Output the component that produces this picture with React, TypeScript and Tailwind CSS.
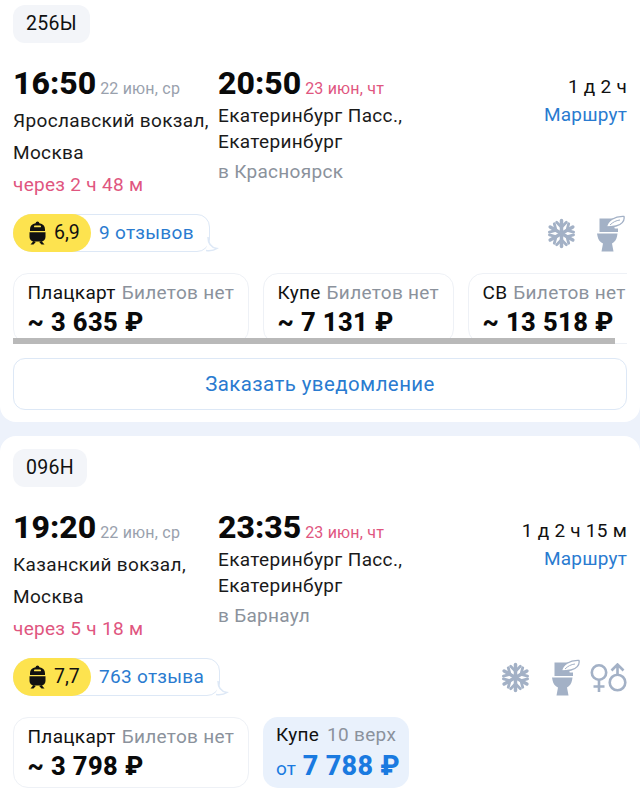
const font = "font-['Roboto',sans-serif]";

function Snow() {
  return (
    <svg width="31" height="31" viewBox="0 0 32 32" fill="none" stroke="#a3b1c6" strokeLinecap="round">
      {[0, 60, 120].map((a) => (
        <g key={a} transform={`rotate(${a} 16 16)`}>
          <path d="M16 2.500v27" strokeWidth="3.600" />
          <path d="M11 4.500 16 9.500l5-5M11 27.500 16 22.500l5 5" strokeWidth="2.900" />
        </g>
      ))}
    </svg>
  );
}

function Toilet() {
  return (
    <svg width="28" height="37" viewBox="0 0 28 37">
      <path d="M2.500 3.500h14l1.500 13.500H2.500z" fill="#a3b1c6" />
      <path d="M0 18.500h20.500l-.5 3c-.6 3.500-2.500 5.500-5 7l1.500 8H4.500L6 28.500c-3-1.500-4.800-3.500-5.400-7z" fill="#a3b1c6" />
      <path d="M9.500 12c1-6 8-11 17.500-10.500 1 4.500-3 8.500-8 9.500-3 .6-6.500 1-9.500 1z" fill="#fff" stroke="#a3b1c6" strokeWidth="1.300" />
      <path d="M13 10c3-3 6-4.500 10-5" fill="none" stroke="#a3b1c6" strokeWidth="1" />
      <path d="M7 13.500h14v3.500H7z" fill="#a3b1c6" />
    </svg>
  );
}

function Gender() {
  return (
    <svg width="37" height="29" viewBox="0 0 37 29" fill="none" stroke="#a3b1c6" strokeWidth="2.600">
      <circle cx="9" cy="9.500" r="7.200" />
      <path d="M9 17v12M3.500 23.500h11" />
      <circle cx="27.500" cy="19.500" r="7.800" />
      <path d="M27.500 12V2M21.500 7.500 27.500 1.500l6 6" />
    </svg>
  );
}

function Train() {
  return (
    <svg width="17" height="24" viewBox="0 0 17 24">
      <path d="M8.500 0.500a2 2 0 0 1 1.900 1.800c3.600.6 5.600 2.900 5.600 6V10H1V8.300c0-3.100 2-5.400 5.600-6A2 2 0 0 1 8.500 0.500z" fill="#111" />
      <rect x="5" y="4.500" width="7" height="1.800" rx=".9" fill="#fde34f" />
      <path d="M.5 11.200h16V15.500c0 3.300-2.200 5-4.500 5H5c-2.300 0-4.500-1.700-4.500-5z" fill="#111" />
      <path d="M4.500 20 1.500 23.500h3L6.800 21M12.500 20l3 3.500h-3L10.200 21" fill="#111" />
    </svg>
  );
}

function Rating({ score, text, width }: { score: string; text: string; width: string }) {
  return (
    <div className={`relative h-[38px] ${width}`}>
      <div className="flex h-full items-center rounded-r-[13px] rounded-l-[19px] border-[1.500px] border-[#dde8f6] bg-white pl-[78px] text-[19px] tracking-[0.3px] text-[#2a7bd0]">
        <span className="pl-[7px]">{text}</span>
      </div>
      <svg className="absolute -right-[10px] bottom-0" width="14" height="16" viewBox="0 0 14 16" fill="none">
        <path d="M2 1c0 7 3 10.500 9 11.500-3 2-7 2.500-11 2" fill="#fff" stroke="#dde8f6" strokeWidth="1.500" />
      </svg>
      <div className="absolute left-0 top-0 flex h-[38px] w-[78px] items-center gap-[8px] rounded-full bg-[#fde34f] pl-[16px] text-[19.500px] text-[#111]">
        <Train />
        <span>{score}</span>
      </div>
    </div>
  );
}

function Price({ name, note, price, width }: { name: string; note: string; price: string; width: string }) {
  return (
    <div className={`h-[71px] shrink-0 rounded-[15px] border-[1.500px] border-[#eef1f6] bg-white pl-[13.500px] pt-[6px] ${width}`}>
      <div className="whitespace-nowrap text-[19px] leading-[26px] tracking-[0.3px] text-[#111]">
        {name} <span className="ml-[1px] text-[#8b929c]">{note}</span>
      </div>
      <div className="whitespace-nowrap text-[25.500px] font-extrabold leading-[33px] tracking-[0.4px] text-[#0a0a0a]">
        ~ {price}
      </div>
    </div>
  );
}

function Trip(p: {
  num: string;
  dep: string;
  depDate: string;
  st1: string;
  st2: string;
  wait: string;
  arr: string;
  arrDate: string;
  dest: string;
  dur: string;
}) {
  return (
    <>
      <div className="flex h-[38px] w-fit items-center rounded-[12px] bg-[#f3f5f9] px-[13px] text-[19.500px] tracking-[0.3px] text-[#111]">
        {p.num}
      </div>
      <div className="mt-[16px] grid h-[142px] grid-cols-[205px_1fr_auto]">
        <div>
          <div className="flex h-[46px] items-baseline gap-[4px] pt-[1px]">
            <span className="text-[32px] font-extrabold leading-[46px] text-[#0a0a0a]">{p.dep}</span>
            <span className="text-[16px] tracking-[0.2px] text-[#99a1ad]">{p.depDate}</span>
          </div>
          <div className="text-[19px] leading-[32px] tracking-[0.35px] text-[#1a1a1a]">
            {p.st1}
            <br />
            {p.st2}
          </div>
          <div className="text-[19px] leading-[32px] tracking-[0.3px] text-[#e0567f]">{p.wait}</div>
        </div>
        <div>
          <div className="flex h-[46px] items-baseline gap-[4px] pt-[1px]">
            <span className="text-[32px] font-extrabold leading-[46px] text-[#0a0a0a]">{p.arr}</span>
            <span className="text-[16px] tracking-[0.2px] text-[#e0567f]">{p.arrDate}</span>
          </div>
          <div className="-mt-[2px] text-[19px] leading-[26px] tracking-[0.35px] text-[#1a1a1a]">
            Екатеринбург Пасс.,
            <br />
            Екатеринбург
          </div>
          <div className="mt-[4px] text-[19px] leading-[26px] tracking-[0.3px] text-[#8b929c]">{p.dest}</div>
        </div>
        <div className="pt-[15px] text-right text-[19px] leading-[26px]">
          <div className="tracking-[0.25px] text-[#111]">{p.dur}</div>
          <div className="mt-[2px] tracking-[0.2px] text-[#2a7bd0]">Маршрут</div>
        </div>
      </div>
    </>
  );
}

export default function App() {
  return (
    <div className={`${font} h-[800px] w-[640px] overflow-hidden bg-[#edf2fb]`}>
      <div className="-mt-[8px] h-[430px] rounded-b-[16px] bg-white px-[13px] pt-[13px]">
        <Trip
          num="256Ы"
          dep="16:50"
          depDate="22 июн, ср"
          st1="Ярославский вокзал,"
          st2="Москва"
          wait="через 2 ч 48 м"
          arr="20:50"
          arrDate="23 июн, чт"
          dest="в Красноярск"
          dur="1 д 2 ч"
        />
        <div className="mt-[13px] flex h-[38px] items-center justify-between">
          <Rating score="6,9" text="9 отзывов" width="w-[197px]" />
          <div className="flex items-center gap-[20px] pr-[2px]">
            <Snow />
            <Toilet />
          </div>
        </div>
        <div className="relative mt-[21px] h-[71px] overflow-hidden">
          <div className="flex gap-[14px]">
            <Price name="Плацкарт" note="Билетов нет" price="3 635 ₽" width="w-[236px]" />
            <Price name="Купе" note="Билетов нет" price="7 131 ₽" width="w-[191px]" />
            <Price name="СВ" note="Билетов нет" price="13 518 ₽" width="w-[180px]" />
          </div>
          <div className="absolute bottom-0 left-0 h-[6px] w-[602px] bg-[#b9b9b9]" />
        </div>
        <div className="mt-[14px] flex h-[52px] items-center justify-center rounded-[12px] border-[1.500px] border-[#dde8f6] bg-white text-[20.400px] tracking-[0.45px] text-[#2a7bd0]">
          Заказать уведомление
        </div>
      </div>
      <div className="mt-[14px] h-[400px] rounded-t-[16px] bg-white px-[13px] pt-[13px]">
        <Trip
          num="096Н"
          dep="19:20"
          depDate="22 июн, ср"
          st1="Казанский вокзал,"
          st2="Москва"
          wait="через 5 ч 18 м"
          arr="23:35"
          arrDate="23 июн, чт"
          dest="в Барнаул"
          dur="1 д 2 ч 15 м"
        />
        <div className="mt-[13px] flex h-[38px] items-center justify-between">
          <Rating score="7,7" text="763 отзыва" width="w-[207px]" />
          <div className="flex items-center">
            <Snow />
            <div className="ml-[21px]">
              <Toilet />
            </div>
            <div className="ml-[10px]">
              <Gender />
            </div>
          </div>
        </div>
        <div className="mt-[21px] flex gap-[14px]">
          <Price name="Плацкарт" note="Билетов нет" price="3 798 ₽" width="w-[236px]" />
          <div className="h-[71px] w-[146px] rounded-[15px] bg-[#e9f1fc] pl-[13px] pt-[5px]">
            <div className="whitespace-nowrap text-[19px] leading-[26px] tracking-[0.3px] text-[#111]">
              Купе <span className="ml-[3px] text-[#8b929c]">10 верх</span>
            </div>
            <div className="flex items-baseline gap-[7px] whitespace-nowrap leading-[36px] text-[#1a7ae0]">
              <span className="text-[19px]">от</span>
              <span className="text-[27px] font-extrabold tracking-[0.3px]">7 788 ₽</span>
            </div>
          </div>
        </div>
      </div>
    </div>
  );
}
